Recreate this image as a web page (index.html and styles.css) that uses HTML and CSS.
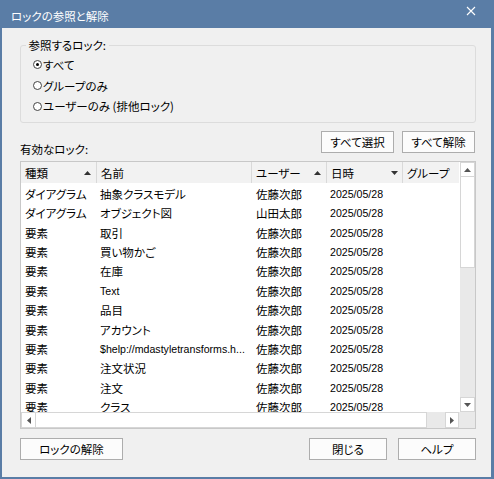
FILE: index.html
```html
<!DOCTYPE html>
<html lang="ja">
<head>
<meta charset="utf-8">
<title>ロックの参照と解除</title>
<link rel="stylesheet" href="styles.css">
</head>
<body>
<div class="window">
  <div class="titlebar">
    <span class="title">ロックの参照と解除</span>
    <svg class="close" width="10" height="10" viewBox="0 0 10 10"><path d="M1 1L9 9M9 1L1 9" stroke="#fff" stroke-width="1.1" fill="none"/></svg>
  </div>
  <div class="client">
    <fieldset class="group">
      <legend>参照するロック:</legend>
      <div class="radio"><span class="circle checked"></span>すべて</div>
      <div class="radio"><span class="circle"></span>グループのみ</div>
      <div class="radio"><span class="circle"></span>ユーザーのみ (排他ロック)</div>
    </fieldset>
    <div class="listbar">
      <span class="label">有効なロック:</span>
      <div class="btns">
        <button class="btn w73">すべて選択</button>
        <button class="btn w73">すべて解除</button>
      </div>
    </div>
    <div class="list">
      <div class="table">
        <div class="hdr">
          <div class="hc c1"><span>種類</span><svg width="7" height="4" viewBox="0 0 7 4"><path d="M0 4L3.5 0L7 4Z" fill="#333"/></svg></div>
          <div class="hc c2"><span>名前</span></div>
          <div class="hc c3"><span>ユーザー</span><svg width="7" height="4" viewBox="0 0 7 4"><path d="M0 4L3.5 0L7 4Z" fill="#333"/></svg></div>
          <div class="hc c4"><span>日時</span><svg width="7" height="4" viewBox="0 0 7 4"><path d="M0 0L3.5 4L7 0Z" fill="#333"/></svg></div>
          <div class="hc c5"><span>グループ</span></div>
        </div>
        <div class="rows">
          <div class="row"><span class="c c1">ダイアグラム</span><span class="c c2">抽象クラスモデル</span><span class="c c3">佐藤次郎</span><span class="c c4 lat">2025/05/28</span></div>
          <div class="row"><span class="c c1">ダイアグラム</span><span class="c c2">オブジェクト図</span><span class="c c3">山田太郎</span><span class="c c4 lat">2025/05/28</span></div>
          <div class="row"><span class="c c1">要素</span><span class="c c2">取引</span><span class="c c3">佐藤次郎</span><span class="c c4 lat">2025/05/28</span></div>
          <div class="row"><span class="c c1">要素</span><span class="c c2">買い物かご</span><span class="c c3">佐藤次郎</span><span class="c c4 lat">2025/05/28</span></div>
          <div class="row"><span class="c c1">要素</span><span class="c c2">在庫</span><span class="c c3">佐藤次郎</span><span class="c c4 lat">2025/05/28</span></div>
          <div class="row"><span class="c c1">要素</span><span class="c c2 lat">Text</span><span class="c c3">佐藤次郎</span><span class="c c4 lat">2025/05/28</span></div>
          <div class="row"><span class="c c1">要素</span><span class="c c2">品目</span><span class="c c3">佐藤次郎</span><span class="c c4 lat">2025/05/28</span></div>
          <div class="row"><span class="c c1">要素</span><span class="c c2">アカウント</span><span class="c c3">佐藤次郎</span><span class="c c4 lat">2025/05/28</span></div>
          <div class="row"><span class="c c1">要素</span><span class="c c2 lat">$help://mdastyletransforms.h...</span><span class="c c3">佐藤次郎</span><span class="c c4 lat">2025/05/28</span></div>
          <div class="row"><span class="c c1">要素</span><span class="c c2">注文状況</span><span class="c c3">佐藤次郎</span><span class="c c4 lat">2025/05/28</span></div>
          <div class="row"><span class="c c1">要素</span><span class="c c2">注文</span><span class="c c3">佐藤次郎</span><span class="c c4 lat">2025/05/28</span></div>
          <div class="row"><span class="c c1">要素</span><span class="c c2">クラス</span><span class="c c3">佐藤次郎</span><span class="c c4 lat">2025/05/28</span></div>
        </div>
      </div>
      <div class="vscroll">
        <div class="sb"><svg width="7" height="4" viewBox="0 0 7 4"><path d="M0 4L3.5 0L7 4Z" fill="#555"/></svg></div>
        <div class="vthumb"></div>
        <div class="track"></div>
        <div class="sb"><svg width="7" height="4" viewBox="0 0 7 4"><path d="M0 0L3.5 4L7 0Z" fill="#555"/></svg></div>
      </div>
      <div class="hscroll">
        <div class="sb hb"><svg width="4" height="7" viewBox="0 0 4 7"><path d="M4 0L0 3.5L4 7Z" fill="#555"/></svg></div>
        <div class="hthumb"></div>
        <div class="track"></div>
        <div class="sb hb hr"><svg width="4" height="7" viewBox="0 0 4 7"><path d="M0 0L4 3.5L0 7Z" fill="#555"/></svg></div>
      </div>
      <div class="corner"></div>
    </div>
    <div class="footer">
      <button class="btn w103">ロックの解除</button>
      <button class="btn w78 push">閉じる</button>
      <button class="btn w78">ヘルプ</button>
    </div>
  </div>
</div>
</body>
</html>
```

FILE: styles.css
```css
* { box-sizing: border-box; }
html, body { margin: 0; padding: 0; }
body {
  width: 494px;
  height: 479px;
  overflow: hidden;
  font-family: "Noto Sans CJK JP", "Noto Sans", sans-serif;
  font-size: 11.5px;
  font-feature-settings: "palt" 1;
  color: #000;
}
.window {
  width: 494px;
  height: 479px;
  border: solid #5a7da6;
  border-width: 0 3px 2px 2px;
  background: #f0f0f0;
  display: flex;
  flex-direction: column;
}
.titlebar {
  height: 28px;
  flex: none;
  background: #5a7da6;
  color: #fff;
  display: flex;
  justify-content: space-between;
  align-items: flex-start;
  padding: 0 15px 0 9px;
}
.title { line-height: 14px; margin-top: 9px; }
.close { margin-top: 6px; }
.client {
  flex: 1;
  display: flex;
  flex-direction: column;
  padding: 0 15px 0 16px;
}
.group {
  margin: 10px 0 0 2px;
  border: 1px solid #dcdcdc;
  border-radius: 3px;
  padding: 2.6px 0 5.5px 12px;
  min-width: 0;
}
.group legend {
  padding: 0 3px;
  margin-left: -7.5px;
  line-height: 14px;
}
.radio {
  height: 20.7px;
  display: flex;
  align-items: center;
  line-height: 14px;
}
.circle {
  width: 9px;
  height: 9px;
  border: 1px solid #444;
  border-radius: 50%;
  margin-right: 1px;
  display: flex;
  align-items: center;
  justify-content: center;
  background: #fff;
}
.circle.checked::after {
  content: "";
  width: 3px;
  height: 3px;
  border-radius: 50%;
  background: #000;
}
.listbar {
  display: flex;
  justify-content: space-between;
  margin: 8px 0 0 2px;
  height: 22px;
}
.listbar .label { padding-top: 11px; line-height: 14px; }
.btns { display: flex; gap: 8px; margin-right: 1px; }
.btn {
  height: 22px;
  border: 1px solid #adadad;
  background: #fcfcfc;
  font: inherit;
  font-feature-settings: "palt" 1;
  color: #000;
  padding: 0;
  line-height: 20px;
  text-align: center;
}
.w73 { width: 73px; }
.w78 { width: 78px; }
.w103 { width: 103px; }
.list {
  margin: 8px 0 0 2px;
  height: 268px;
  border: 1px solid #c8c8c8;
  background: #fff;
  display: grid;
  grid-template-columns: 1fr 16px;
  grid-template-rows: 1fr 16px;
  flex: none;
}
.table { overflow: hidden; min-width: 0; }
.hdr { display: flex; height: 21px; background: #f2f2f2; }
.hc {
  flex: none;
  border-right: 1px solid #d9d9d9;
  padding: 0 5px 0 4px;
  display: flex;
  align-items: center;
  justify-content: space-between;
  line-height: 14px;
  white-space: nowrap;
}
.hc.c4 { padding-right: 4px; }
.rows { padding-top: 1px; }
.row {
  display: flex;
  height: 19.4px;
  align-items: center;
  white-space: nowrap;
}
.c { flex: none; padding-left: 4px; overflow: hidden; line-height: 14px; }
.c1 { width: 76px; }
.c2 { width: 155px; }
.row .c2 { padding-left: 3px; }
.c3 { width: 75px; }
.c4 { width: 76px; }
.row .c4 { padding-left: 3px; }
.c5 { width: 75px; }
.lat { font-family: "Liberation Sans", sans-serif; font-size: 10.6px; }
.vscroll {
  display: flex;
  flex-direction: column;
  border-left: 1px solid #fff;
  background: #e9e9e9;
}
.sb {
  height: 15px;
  flex: none;
  background: #fff;
  border: 1px solid #d6d6d6;
  display: flex;
  align-items: center;
  justify-content: center;
}
.vthumb { height: 91px; flex: none; background: #fff; border: 1px solid #d6d6d6; border-top: 0; }
.track { flex: 1; }
.hscroll { display: flex; background: #e9e9e9; }
.hscroll .sb { height: 16px; }
.hb { width: 15px; }
.hr { width: 14px; }
.hthumb { width: 391px; flex: none; background: #fff; border: 1px solid #d6d6d6; border-left: 0; }
.corner { background: #e9e9e9; }
.footer { display: flex; margin: 9px 0 0 2px; }
.push { margin-left: auto; margin-right: 11px; }
```
